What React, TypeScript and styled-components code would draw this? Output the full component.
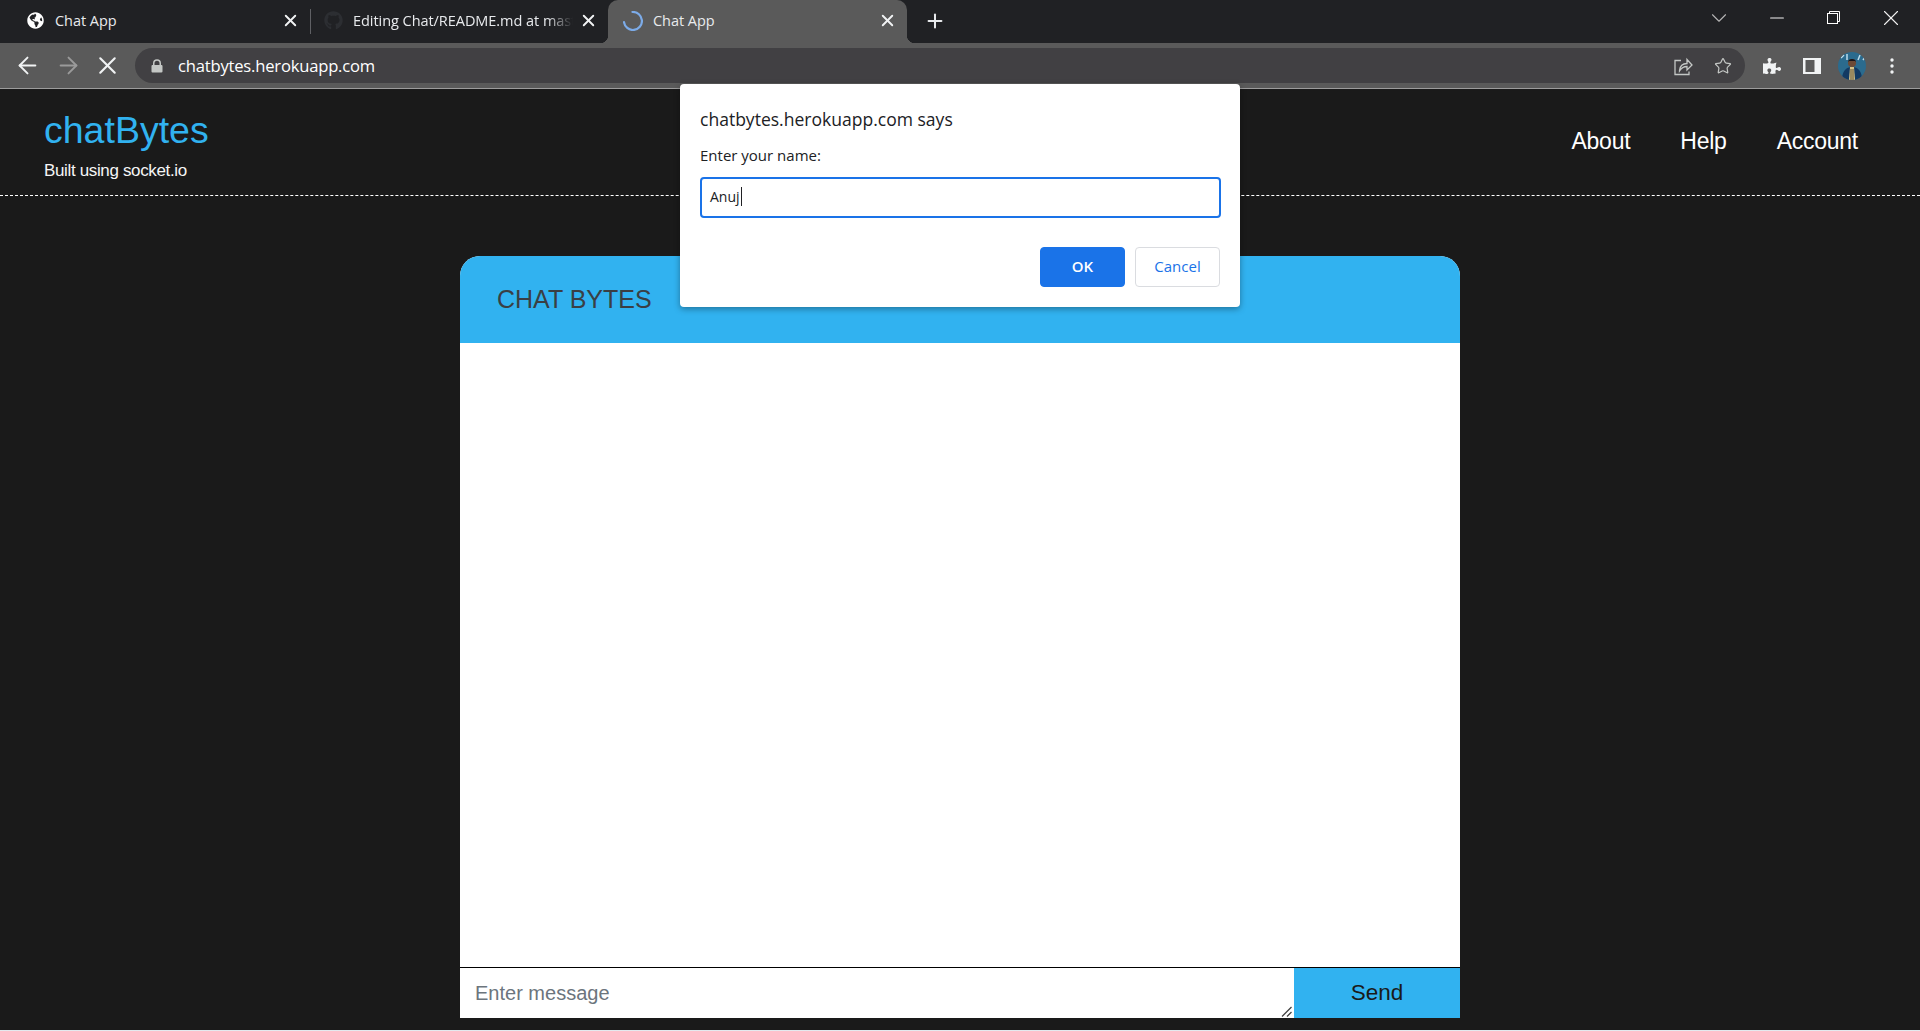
import styled, { createGlobalStyle } from 'styled-components'
import { ArrowLeft, ArrowRight, ChevronDown, Minus, Plus, Star, X } from 'lucide-react'
import { FaGithub, FaGlobeAmericas, FaPuzzlePiece } from 'react-icons/fa'

const GlobalStyle = createGlobalStyle`
  html, body {
    margin: 0;
    padding: 0;
    background: #e3e9ee;
  }

  * {
    box-sizing: border-box;
  }

  svg {
    flex: none;
  }
`

const Screen = styled.div`
  position: relative;
  display: flex;
  flex-direction: column;
  width: 1920px;
  height: 1031px;
  overflow: hidden;
`

const TabBar = styled.div`
  display: flex;
  align-items: stretch;
  height: 43px;
  padding-left: 12px;
  background: #202124;
`

const Tab = styled.div<{ $active?: boolean; $divider?: boolean }>`
  position: relative;
  display: flex;
  align-items: center;
  width: ${({ $active }) => ($active ? '299px' : '298px')};
  padding: 0 13px 2px ${({ $active }) => ($active ? '17px' : '15px')};
  border-radius: 10px 10px 0 0;
  background: ${({ $active }) => ($active ? '#5a5a5a' : 'transparent')};

  ${({ $divider }) =>
    $divider &&
    `
    &::after {
      content: '';
      position: absolute;
      top: 9px;
      left: 0;
      width: 1px;
      height: 25px;
      background: #5f6064;
    }
  `}

  ${({ $active }) =>
    $active &&
    `
    &::before, &::after {
      content: '';
      position: absolute;
      bottom: 0;
      width: 8px;
      height: 8px;
    }
    &::before {
      left: -8px;
      background: radial-gradient(circle at 0 0, transparent 8px, #5a5a5a 8.5px);
    }
    &::after {
      right: -8px;
      background: radial-gradient(circle at 100% 0, transparent 8px, #5a5a5a 8.5px);
    }
  `}
`

const TabIcon = styled.span`
  display: flex;
  flex: none;
  align-items: center;
  justify-content: center;
  width: 16px;
  height: 18px;
  margin-right: 12px;
  color: #ffffff;
`

const TabTitle = styled.span<{ $fade?: boolean }>`
  flex: 1;
  margin-right: 8px;
  overflow: hidden;
  font-family: 'Open Sans', sans-serif;
  font-size: 14.5px;
  letter-spacing: -0.05px;
  color: #e8eaed;
  white-space: nowrap;
  ${({ $fade }) =>
    $fade &&
    `
    -webkit-mask-image: linear-gradient(to right, #000 88%, transparent 100%);
    mask-image: linear-gradient(to right, #000 88%, transparent 100%);
  `}
`

const TabClose = styled.span`
  display: flex;
  flex: none;
  align-items: center;
  justify-content: center;
  width: 14px;
  color: #f1f3f4;
`

const NewTab = styled.span`
  display: flex;
  align-items: center;
  margin-left: 17px;
  padding-bottom: 1px;
  color: #e8eaed;
`

const WindowControls = styled.div`
  display: flex;
  align-items: center;
  height: 36px;
  margin-left: auto;
  padding-right: 21px;
  color: #ffffff;
`

const WindowButton = styled.span<{ $gap: number; $dim?: boolean }>`
  display: flex;
  align-items: center;
  justify-content: center;
  width: 16px;
  margin-left: ${({ $gap }) => $gap}px;
  color: ${({ $dim }) => ($dim ? '#b5b5b5' : '#f1f1f1')};
`

const Toolbar = styled.div`
  display: flex;
  align-items: center;
  height: 46px;
  padding: 0 0 0 17px;
  background: #5a5a5a;
  border-bottom: 1px solid #9c9c9c;
`

const NavButton = styled.span<{ $dim?: boolean; $gap: number }>`
  display: flex;
  align-items: center;
  justify-content: center;
  width: 20px;
  margin-right: ${({ $gap }) => $gap}px;
  color: ${({ $dim }) => ($dim ? '#9a9a9a' : '#f1f3f4')};
`

const UrlBar = styled.div`
  display: flex;
  flex: none;
  align-items: center;
  width: 1610px;
  height: 35px;
  padding: 0 13px 0 16px;
  border-radius: 18px;
  background: #414043;
`

const UrlText = styled.span`
  margin-left: 15px;
  font-family: 'Open Sans', sans-serif;
  font-size: 16.6px;
  letter-spacing: -0.2px;
  color: #ffffff;
`

const UrlActions = styled.div`
  display: flex;
  align-items: center;
  gap: 21px;
  margin-left: auto;
  color: #c4c7c5;
`

const ToolbarActions = styled.div`
  display: grid;
  grid-auto-flow: column;
  grid-auto-columns: 40px;
  align-items: center;
  justify-items: center;
  margin-left: 7px;
  color: #f1f3f4;
`

const Page = styled.main`
  flex: none;
  height: 941px;
  background: #1a1a1a;
`

const SiteHeader = styled.header`
  display: flex;
  align-items: center;
  justify-content: space-between;
  height: 107px;
  padding: 0 62px 0 44px;
  border-bottom: 1px dashed #ffffff;
`

const Brand = styled.div`
  display: flex;
  flex-direction: column;
  margin-top: 6px;
`

const BrandName = styled.h1`
  margin: -1px 0 0;
  font-family: 'Liberation Sans', Arial, sans-serif;
  font-size: 37.5px;
  font-weight: 400;
  line-height: 44px;
  color: #31b2f0;
`

const BrandSub = styled.span`
  margin-top: 8px;
  font-family: 'Liberation Sans', Arial, sans-serif;
  font-size: 17px;
  line-height: 22px;
  letter-spacing: -0.35px;
  color: #f5f5f5;
`

const SiteNav = styled.nav`
  display: flex;
  align-items: center;
  gap: 50px;
  margin-bottom: 1px;
`

const SiteLink = styled.a`
  font-family: 'Liberation Sans', Arial, sans-serif;
  font-size: 23px;
  letter-spacing: -0.25px;
  color: #ffffff;
`

const ChatCard = styled.section`
  display: flex;
  flex-direction: column;
  width: 1000px;
  height: 762px;
  margin: 60px auto 0;
  overflow: hidden;
  border-radius: 20px 20px 0 0;
  background: #ffffff;
`

const ChatHeader = styled.div`
  display: flex;
  flex: none;
  align-items: center;
  height: 87px;
  padding-left: 37px;
  background: #31b2f0;
`

const ChatTitle = styled.h2`
  margin: 0;
  font-family: 'Liberation Sans', Arial, sans-serif;
  font-size: 25px;
  font-weight: 400;
  color: #3a3f44;
`

const Messages = styled.div`
  flex: 1;
  background: #ffffff;
`

const Composer = styled.form`
  display: flex;
  flex: none;
  height: 51px;
  margin: 0;
  border-top: 1px solid #000000;
`

const MessageField = styled.div`
  position: relative;
  flex: 1;
  height: 50px;
`

const MessageInput = styled.textarea`
  display: block;
  width: 100%;
  height: 50px;
  margin: 0;
  padding: 13px 15px;
  border: 0;
  outline: 0;
  resize: none;
  font-family: 'Liberation Sans', Arial, sans-serif;
  font-size: 20px;
  line-height: 24px;
  color: #212529;

  &::placeholder {
    color: #6c757d;
  }
`

const ResizeGrip = styled.svg`
  position: absolute;
  right: 2px;
  bottom: 1px;
`

const SendButton = styled.button`
  width: 166px;
  height: 50px;
  padding: 0;
  border: 0;
  background: #31b2f0;
  font-family: 'Liberation Sans', Arial, sans-serif;
  font-size: 22.5px;
  color: #1a1a1a;
`

const Dialog = styled.div`
  position: absolute;
  top: 84px;
  left: 680px;
  width: 560px;
  height: 223px;
  padding: 24px 20px 0;
  border-radius: 4px;
  background: #ffffff;
  box-shadow: 0 2px 6px rgba(0, 0, 0, 0.35);
  font-family: 'Open Sans', sans-serif;
`

const DialogTitle = styled.div`
  font-size: 17.55px;
  line-height: 22px;
  color: #202124;
`

const DialogLabel = styled.div`
  margin-top: 15px;
  font-size: 15px;
  line-height: 20px;
  color: #202124;
`

const PromptField = styled.div`
  display: flex;
  align-items: center;
  width: 521px;
  height: 41px;
  margin-top: 12px;
  padding: 0 8px 2px;
  border: 2px solid #1a73e8;
  border-radius: 4px;
  font-size: 14px;
  color: #202124;
`

const Caret = styled.span`
  width: 1px;
  height: 19px;
  margin-left: 1px;
  background: #202124;
`

const DialogActions = styled.div`
  display: flex;
  justify-content: flex-end;
  gap: 10px;
  width: 520px;
  margin-top: 29px;
`

const DialogButton = styled.button<{ $primary?: boolean }>`
  width: 85px;
  height: 40px;
  padding: 0 0 2px;
  border: 1px solid ${({ $primary }) => ($primary ? '#1a73e8' : '#dadce0')};
  border-radius: 4px;
  background: ${({ $primary }) => ($primary ? '#1a73e8' : '#ffffff')};
  font-family: 'Open Sans', sans-serif;
  font-size: 15px;
  font-weight: ${({ $primary }) => ($primary ? 600 : 500)};
  color: ${({ $primary }) => ($primary ? '#ffffff' : '#1a73e8')};
`

const Spinner = () => (
  <svg width="20" height="20" viewBox="0 0 20 20" fill="none">
    <path
      d="M9.500 1a9 9 0 1 1-8.500 10"
      stroke="#7cabe8"
      strokeWidth="2.200"
      strokeLinecap="round"
    />
  </svg>
)

const LockIcon = () => (
  <svg width="12" height="14" viewBox="0 0 12 14" fill="#c4c7c5">
    <path d="M2 6V4.200a4 4 0 0 1 8 0V6h.6c.5 0 .9.4.9.9v5.700c0 .5-.4.9-.9.9H1.400c-.5 0-.9-.4-.9-.9V6.900c0-.5.4-.9.9-.9H2zm1.500 0h5V4.200a2.500 2.500 0 0 0-5 0V6z" />
  </svg>
)

const ShareIcon = () => (
  <svg width="20" height="20" viewBox="0 0 20 20" fill="none" stroke="#c4c7c5" strokeWidth="1.300">
    <path d="M8 4.500H2v14h14v-3" />
    <path d="M6.500 14.500c.5-4.500 3.500-7 7.500-7V3.500l5 5.500-5 5v-3.500c-3 0-5.500 1.200-7.500 4.500z" />
  </svg>
)

const SidePanelIcon = () => (
  <svg width="18" height="18" viewBox="0 0 18 18">
    <path fill="#f1f3f4" fillRule="evenodd" d="M0 1h18v16H0zM2.500 3v12h9V3z" />
  </svg>
)

const RestoreIcon = () => (
  <svg width="14" height="14" viewBox="0 0 14 14" fill="none" stroke="#ffffff" strokeWidth="1">
    <rect x="0.500" y="2.500" width="10" height="10" />
    <path d="M2.500 2.500V.5h10v10h-2" />
  </svg>
)

const DotsIcon = () => (
  <svg width="4" height="16" viewBox="0 0 4 16" fill="#f1f3f4">
    <circle cx="2" cy="2" r="1.700" />
    <circle cx="2" cy="8" r="1.700" />
    <circle cx="2" cy="14" r="1.700" />
  </svg>
)

const Avatar = () => (
  <svg width="28" height="28" viewBox="0 0 28 28">
    <defs>
      <clipPath id="avatar-clip">
        <circle cx="14" cy="14" r="14" />
      </clipPath>
    </defs>
    <g clipPath="url(#avatar-clip)">
      <rect width="28" height="28" fill="#2b6b8e" />
      <path d="M3 6l3-3M9 8V2M20 8l2-5M25 8l2-3" stroke="#bcdcec" strokeWidth="1.500" />
      <path d="M4 28c0-9 4-13 10-13s10 4 10 13z" fill="#123a63" />
      <path d="M12 15h4l1 13h-6z" fill="#d8c48a" />
      <path d="M13 17v11M15 17v11" stroke="#3c3320" strokeWidth="0.800" />
      <circle cx="14" cy="11" r="4" fill="#6d4a35" />
      <path d="M10 10c0-4 8-4 8 0l-1-1h-6z" fill="#15151a" />
    </g>
  </svg>
)

export default function App() {
  return (
    <>
      <GlobalStyle />
      <Screen>
        <TabBar>
          <Tab>
            <TabIcon>
              <FaGlobeAmericas size={17} />
            </TabIcon>
            <TabTitle>Chat App</TabTitle>
            <TabClose>
              <X size={19} strokeWidth={2.4} />
            </TabClose>
          </Tab>
          <Tab $divider>
            <TabIcon>
              <FaGithub size={19} color="#2c2e32" />
            </TabIcon>
            <TabTitle $fade>Editing Chat/README.md at master</TabTitle>
            <TabClose>
              <X size={19} strokeWidth={2.4} />
            </TabClose>
          </Tab>
          <Tab $active>
            <TabIcon>
              <Spinner />
            </TabIcon>
            <TabTitle>Chat App</TabTitle>
            <TabClose>
              <X size={19} strokeWidth={2.4} />
            </TabClose>
          </Tab>
          <NewTab>
            <Plus size={22} strokeWidth={2.2} />
          </NewTab>
          <WindowControls>
            <WindowButton $gap={0} $dim>
              <ChevronDown size={26} strokeWidth={1} />
            </WindowButton>
            <WindowButton $gap={42}>
              <Minus size={22} strokeWidth={1.1} />
            </WindowButton>
            <WindowButton $gap={41}>
              <RestoreIcon />
            </WindowButton>
            <WindowButton $gap={41}>
              <X size={26} strokeWidth={1} />
            </WindowButton>
          </WindowControls>
        </TabBar>

        <Toolbar>
          <NavButton $gap={21}>
            <ArrowLeft size={27} strokeWidth={1.7} />
          </NavButton>
          <NavButton $dim $gap={19}>
            <ArrowRight size={27} strokeWidth={1.7} />
          </NavButton>
          <NavButton $gap={18}>
            <X size={29} strokeWidth={1.7} />
          </NavButton>
          <UrlBar>
            <LockIcon />
            <UrlText>chatbytes.herokuapp.com</UrlText>
            <UrlActions>
              <ShareIcon />
              <Star size={18} strokeWidth={1.6} />
            </UrlActions>
          </UrlBar>
          <ToolbarActions>
            <FaPuzzlePiece size={18} />
            <SidePanelIcon />
            <Avatar />
            <DotsIcon />
          </ToolbarActions>
        </Toolbar>

        <Page>
          <SiteHeader>
            <Brand>
              <BrandName>chatBytes</BrandName>
              <BrandSub>Built using socket.io</BrandSub>
            </Brand>
            <SiteNav>
              <SiteLink>About</SiteLink>
              <SiteLink>Help</SiteLink>
              <SiteLink>Account</SiteLink>
            </SiteNav>
          </SiteHeader>

          <ChatCard>
            <ChatHeader>
              <ChatTitle>CHAT BYTES</ChatTitle>
            </ChatHeader>
            <Messages />
            <Composer>
              <MessageField>
                <MessageInput placeholder="Enter message" />
                <ResizeGrip width="11" height="11" viewBox="0 0 11 11" stroke="#444444" strokeWidth="1.300">
                  <path d="M1 10.500L10.500 1M6 10.500L10.500 6" />
                </ResizeGrip>
              </MessageField>
              <SendButton type="button">Send</SendButton>
            </Composer>
          </ChatCard>
        </Page>

        <Dialog>
          <DialogTitle>chatbytes.herokuapp.com says</DialogTitle>
          <DialogLabel>Enter your name:</DialogLabel>
          <PromptField>
            Anuj
            <Caret />
          </PromptField>
          <DialogActions>
            <DialogButton $primary>OK</DialogButton>
            <DialogButton>Cancel</DialogButton>
          </DialogActions>
        </Dialog>
      </Screen>
    </>
  )
}
